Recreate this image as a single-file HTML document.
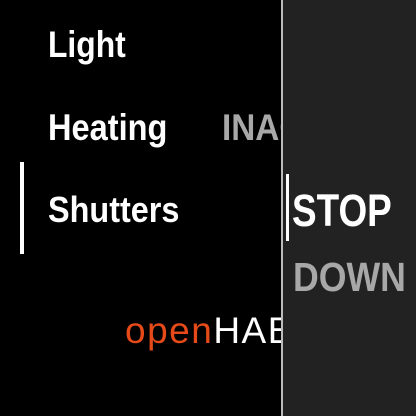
<!DOCTYPE html>
<html><head><style>
html,body{margin:0;padding:0;background:#000;width:416px;height:416px;overflow:hidden;position:relative}
.t{position:absolute;font-family:"Liberation Sans",sans-serif;font-weight:bold;white-space:nowrap;transform-origin:0 0;line-height:1}
#left{position:absolute;left:0;top:0;width:281px;height:416px;overflow:hidden}
</style></head><body>
<div id="left">
<div class="t" style="left:48px;top:26px;font-size:37px;color:#fff;transform:scaleX(0.86)">Light</div>
<div class="t" style="left:48px;top:109px;font-size:37px;color:#fff;transform:scaleX(0.88)">Heating</div>
<div class="t" style="left:222px;top:109px;font-size:37px;color:#a8a8a8;transform:scaleX(0.9)">INACTIVE</div>
<div class="t" style="left:48px;top:192px;font-size:36px;color:#fff;transform:scaleX(0.9)">Shutters</div>
<div style="position:absolute;left:20px;top:162px;width:4px;height:92px;background:#fff"></div>
<div class="t" style="left:125px;top:312px;font-size:37px;font-weight:normal;color:#e64a19;letter-spacing:1.5px">open<span style="color:#fff">HAB</span></div>
</div>
<div style="position:absolute;left:281px;top:0;width:2px;height:416px;background:#bbb"></div>
<div style="position:absolute;left:283px;top:0;width:133px;height:416px;background:#222"></div>
<div style="position:absolute;left:286px;top:174px;width:3px;height:67px;background:#fff"></div>
<div class="t" style="left:292px;top:188px;font-size:45px;color:#fff;transform:scaleX(0.82)">STOP</div>
<div class="t" style="left:293px;top:257px;font-size:41px;color:#a8a8a8;transform:scaleX(0.87)">DOWN</div>
</body></html>
